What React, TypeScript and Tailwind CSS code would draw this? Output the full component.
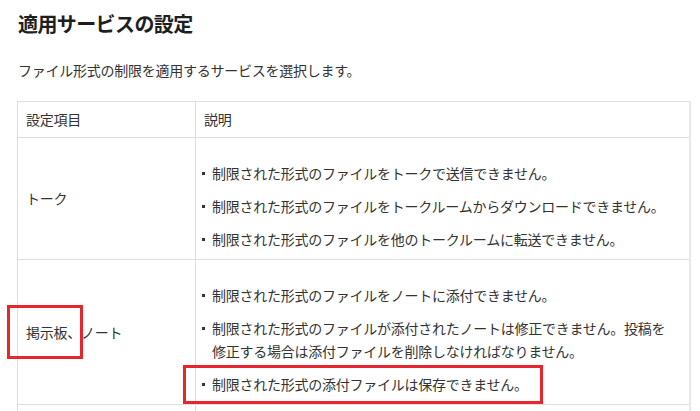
import React from "react";

const rows = [
  {
    label: "トーク",
    items: [
      "制限された形式のファイルをトークで送信できません。",
      "制限された形式のファイルをトークルームからダウンロードできません。",
      "制限された形式のファイルを他のトークルームに転送できません。",
    ],
  },
  {
    label: "掲示板、ノート",
    items: [
      "制限された形式のファイルをノートに添付できません。",
      "制限された形式のファイルが添付されたノートは修正できません。投稿を\n修正する場合は添付ファイルを削除しなければなりません。",
      "制限された形式の添付ファイルは保存できません。",
    ],
  },
];

function Bullet({ text, marked }: { text: string; marked?: boolean }) {
  const lines = text.split("\n");
  return (
    <li className="relative flex items-start gap-[7px] pl-[6px]">
      <span className="mt-[10px] h-[3px] w-[3px] shrink-0 bg-[#333]" />
      <span className="whitespace-nowrap">
        {lines.map((l, i) => (
          <React.Fragment key={i}>
            {i > 0 && <br />}
            {l}
          </React.Fragment>
        ))}
      </span>
      {marked && (
        <span className="pointer-events-none absolute left-[-13px] top-[-8px] bottom-[-8px] w-[360px] border-[3px] border-[#e8242c]" />
      )}
    </li>
  );
}

export default function App() {
  return (
    <div
      className="h-[411px] w-[700px] overflow-hidden bg-white text-[#333] tracking-[-0.25px]"
      style={{ fontFamily: "'Noto Sans CJK JP', 'Noto Sans', sans-serif" }}
    >
      <div className="pl-[17px] pt-[10px]">
        <h2 className="pl-[1px] text-[20px] font-bold leading-[28px] tracking-[-0.6px] text-[#1e1e1e]">
          適用サービスの設定
        </h2>
        <p className="mt-[21px] pl-[1px] text-[14px] leading-[23px]">
          ファイル形式の制限を適用するサービスを選択します。
        </p>

        <table className="mt-[19px] w-[674px] table-fixed border-collapse text-[14px] leading-[23px]">
          <colgroup>
            <col className="w-[178px]" />
            <col />
          </colgroup>
          <thead>
            <tr className="h-[36px]">
              <th className="border border-[#dedede] px-[8px] text-left font-normal">設定項目</th>
              <th className="border border-[#dedede] border-r-2 border-r-[#e8e8e8] px-[8px] text-left font-normal">
                説明
              </th>
            </tr>
          </thead>
          <tbody>
            {rows.map((r, ri) => (
              <tr key={ri}>
                <td className="border border-[#dedede] px-[8px] align-middle">
                  {ri === 1 ? (
                    <>
                      <span className="relative">
                        掲示板、
                        <span className="pointer-events-none absolute left-[-19px] right-[-2px] top-[-17px] bottom-[-17px] border-[3px] border-[#e8242c]" />
                      </span>
                      ノート
                    </>
                  ) : (
                    r.label
                  )}
                </td>
                <td className="border border-[#dedede] border-r-2 border-r-[#e8e8e8] pb-[8px] pl-[0px] pr-[4px] pt-[24px] align-top">
                  <ul className="flex flex-col gap-[10px]">
                    {r.items.map((t, i) => (
                      <Bullet key={i} text={t} marked={ri === 1 && i === 2} />
                    ))}
                  </ul>
                </td>
              </tr>
            ))}
            <tr className="h-[40px]">
              <td className="border border-[#dedede]" />
              <td className="border border-[#dedede] border-r-2 border-r-[#e8e8e8]" />
            </tr>
          </tbody>
        </table>
      </div>
    </div>
  );
}
